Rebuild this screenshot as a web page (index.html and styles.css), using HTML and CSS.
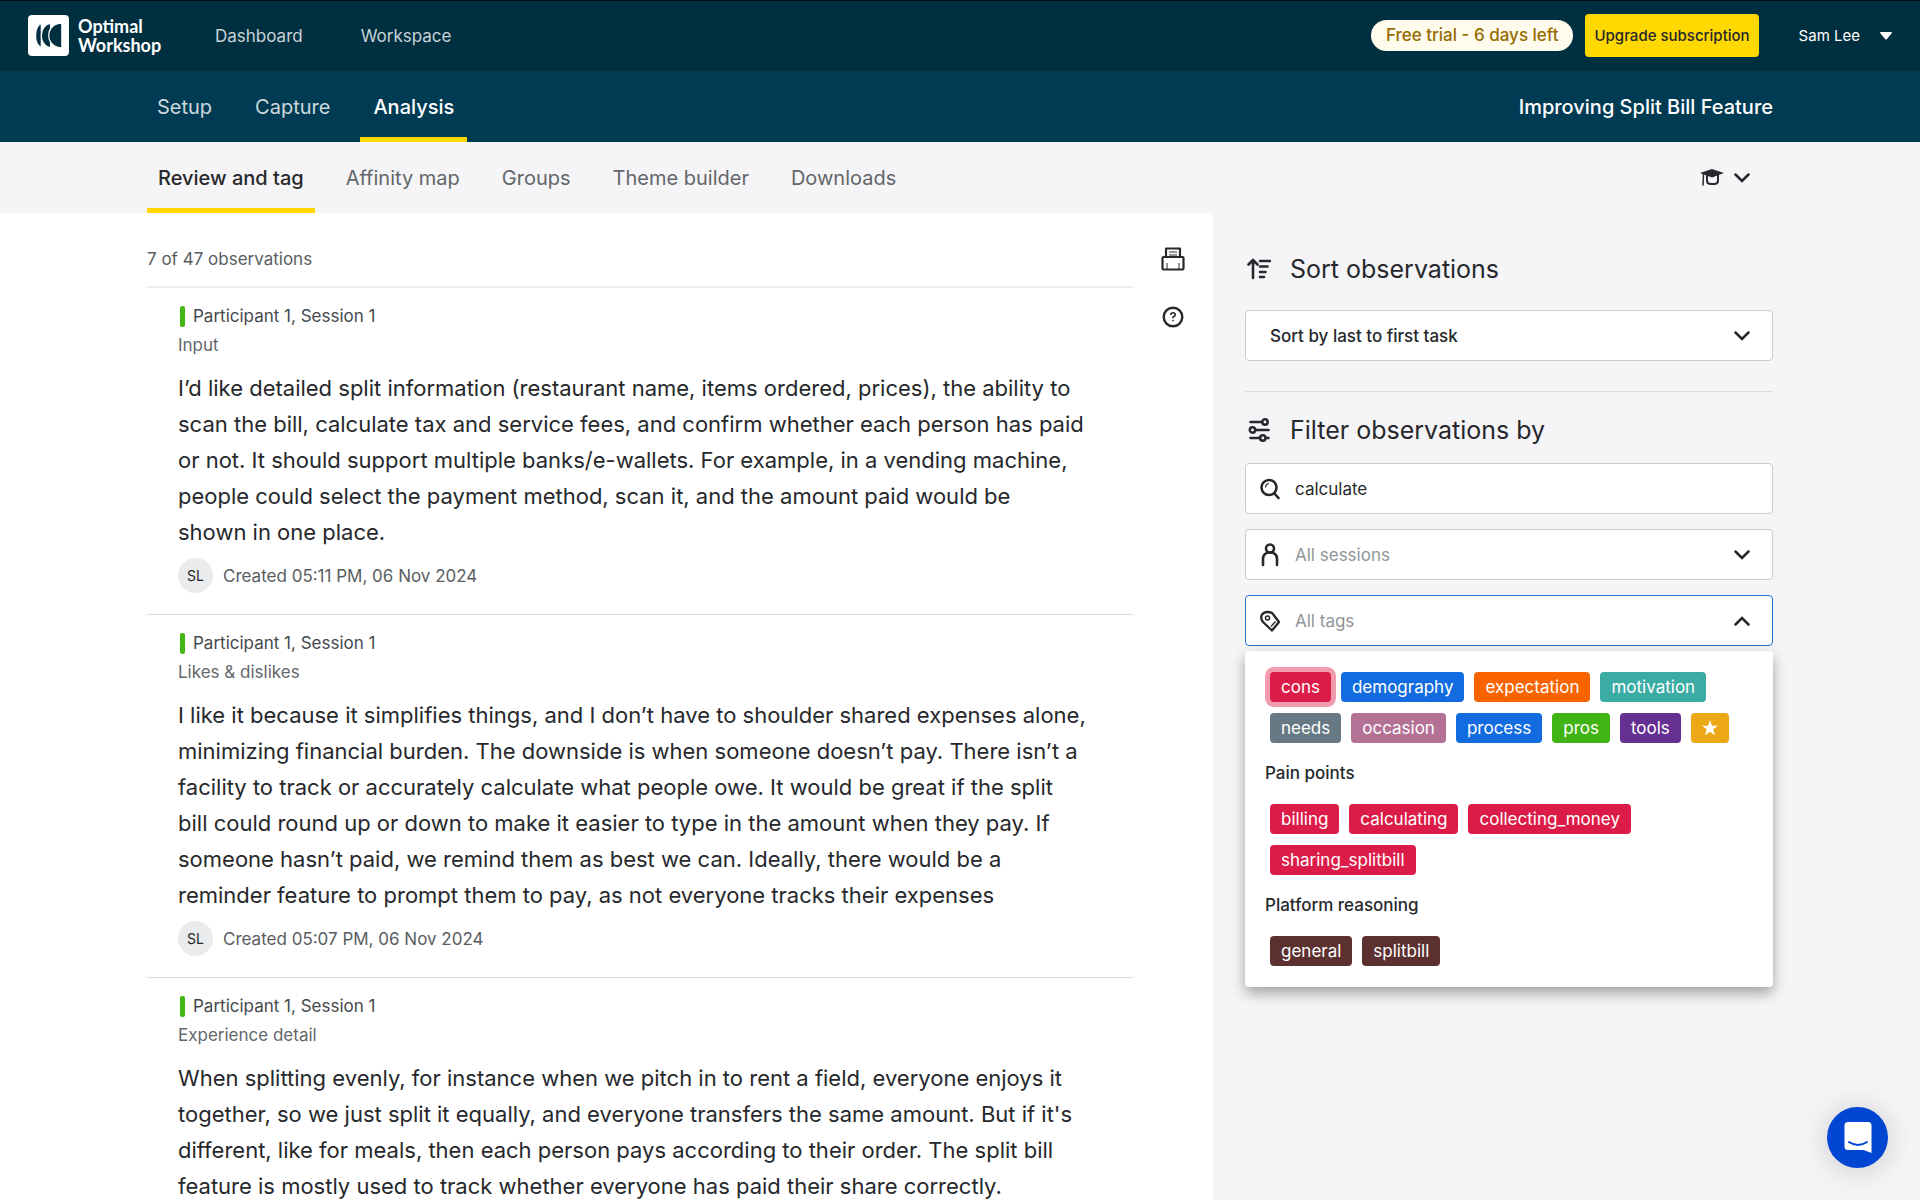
FILE: index.html
```html
<!DOCTYPE html>
<html lang="en">
<head>
  <meta charset="UTF-8" />
  <meta name="viewport" content="width=device-width, initial-scale=1.0"/>
  <title>Improving Split Bill Feature - Review and tag</title>
  <link rel="stylesheet" href="styles.css">
</head>
<body>
  <header class="topbar">
    <a href="#" class="logo">
      <svg class="logo-mark" viewBox="0 0 40 40">
        <rect width="40" height="40" rx="4" fill="#fff"/>
        <g fill="#002f40" stroke="#fff" stroke-width="1.200">
          <path d="M13 8c-7.500 4-7.500 20 0 24z"/>
          <path d="M22 8c-12 2-12 22 0 24z"/>
          <path d="M33 8c-17 0-17 24 0 24z"/>
        </g>
      </svg>
      <span class="logo-text">Optimal<br>Workshop</span>
    </a>
    <nav class="top-links">
      <a href="#">Dashboard</a>
      <a href="#">Workspace</a>
    </nav>
    <div class="account">
      <span class="trial">Free trial - 6 days left</span>
      <button type="button" class="upgrade">Upgrade subscription</button>
      <button type="button" class="user">
        Sam Lee
        <svg width="12" height="8" viewBox="0 0 12 8"><path d="M1 0h10q1.500 0 .5 1.500L7 7q-1 1-2 0L.5 1.500Q-.5 0 1 0z" fill="#fff"/></svg>
      </button>
    </div>
  </header>

  <div class="studybar">
    <nav class="study-tabs">
      <a href="#">Setup</a>
      <a href="#">Capture</a>
      <a href="#" class="active">Analysis</a>
    </nav>
    <div class="study-name">Improving Split Bill Feature</div>
  </div>

  <div class="subbar">
    <nav class="sub-tabs">
      <a href="#" class="active">Review and tag</a>
      <a href="#">Affinity map</a>
      <a href="#">Groups</a>
      <a href="#">Theme builder</a>
      <a href="#">Downloads</a>
    </nav>
    <button type="button" class="learn" aria-label="Learn">
      <svg width="24" height="17" viewBox="0 0 24 17" fill="none">
        <path d="M12 0l12 4-12 4.500L0 4z" fill="#26282b"/>
        <path d="M7 6v5.500q0 3.500 4 3.500h3q4 0 4-3.500V6" stroke="#26282b" stroke-width="2"/>
        <path d="M3.500 5L3 16.500" stroke="#26282b" stroke-width="1.500"/>
      </svg>
      <svg class="chevron" viewBox="0 0 16 10"><path d="M1.500 1.500L8 8l6.500-6.500"/></svg>
    </button>
  </div>

  <div class="page">
    <main class="content">
      <section class="observations">
        <p class="count">7 of 47 observations</p>

        <article class="observation">
          <h3>Participant 1, Session 1</h3>
          <p class="task">Input</p>
          <p class="note">
            I’d like detailed split information (restaurant name, items ordered, prices), the ability to<br>
            scan the bill, calculate tax and service fees, and confirm whether each person has paid<br>
            or not. It should support multiple banks/e-wallets. For example, in a vending machine,<br>
            people could select the payment method, scan it, and the amount paid would be<br>
            shown in one place.
          </p>
          <div class="meta"><span class="avatar">SL</span>Created 05:11 PM, 06 Nov 2024</div>
        </article>

        <article class="observation">
          <h3>Participant 1, Session 1</h3>
          <p class="task">Likes &amp; dislikes</p>
          <p class="note">
            I like it because it simplifies things, and I don’t have to shoulder shared expenses alone,<br>
            minimizing financial burden. The downside is when someone doesn’t pay. There isn’t a<br>
            facility to track or accurately calculate what people owe. It would be great if the split<br>
            bill could round up or down to make it easier to type in the amount when they pay. If<br>
            someone hasn’t paid, we remind them as best we can. Ideally, there would be a<br>
            reminder feature to prompt them to pay, as not everyone tracks their expenses
          </p>
          <div class="meta"><span class="avatar">SL</span>Created 05:07 PM, 06 Nov 2024</div>
        </article>

        <article class="observation">
          <h3>Participant 1, Session 1</h3>
          <p class="task">Experience detail</p>
          <p class="note">
            When splitting evenly, for instance when we pitch in to rent a field, everyone enjoys it<br>
            together, so we just split it equally, and everyone transfers the same amount. But if it's<br>
            different, like for meals, then each person pays according to their order. The split bill<br>
            feature is mostly used to track whether everyone has paid their share correctly.
          </p>
        </article>
      </section>

      <div class="tools">
        <button type="button" aria-label="Print">
          <svg width="24" height="24" viewBox="0 0 24 24" fill="none" stroke="#26282b" stroke-width="2.200" stroke-linejoin="round">
            <path d="M5 10V1.500h14V10"/>
            <rect x="1.500" y="10" width="21" height="12.500" rx="1"/>
            <path d="M8 5h8M8 8h8" stroke-width="1.200"/>
            <path d="M6 16v6M18 16v6" stroke-width="1"/>
          </svg>
        </button>
        <button type="button" aria-label="Help">
          <svg width="24" height="24" viewBox="0 0 24 24" fill="none" stroke="#26282b" stroke-width="2.400">
            <circle cx="12" cy="12" r="9.300"/>
            <path d="M9.800 10q0-2.200 2.200-2.200t2.200 2q0 1.300-2.200 2.500v1" stroke-width="1.600"/>
            <circle cx="12" cy="15.600" r=".5" stroke-width="1"/>
          </svg>
        </button>
      </div>
    </main>

    <aside class="sidebar">
      <h2>
        <svg width="24" height="24" viewBox="0 0 24 24" fill="none" stroke="#26282b" stroke-width="2.600" stroke-linecap="round" stroke-linejoin="round">
          <path d="M6 21V3M1.500 7.500L6 3l4.500 4.500M13 4h10M13 9.500h7.500M13 15h5.500M13 20h4"/>
        </svg>
        <label for="sort">Sort observations</label>
      </h2>
      <div class="field">
        <select id="sort" class="sort">
          <option>Sort by last to first task</option>
          <option>Sort by first to last task</option>
        </select>
        <svg class="chevron" viewBox="0 0 16 10"><path d="M1.500 1.500L8 8l6.500-6.500"/></svg>
      </div>

      <hr>

      <h2>
        <svg width="24" height="24" viewBox="0 0 24 24" fill="none" stroke="#26282b" stroke-width="2.500" stroke-linecap="round">
          <path d="M3.500 4h11M9 12h12.500M3.500 20H13M19 20h2.500"/>
          <circle cx="18" cy="4" r="2.700"/>
          <circle cx="5.500" cy="12" r="2.700"/>
          <circle cx="15.800" cy="20" r="2.700"/>
        </svg>
        Filter observations by
      </h2>

      <div class="filters">
        <div class="field">
          <svg class="field-icon" viewBox="0 0 20 24" fill="none" stroke="#26282b" stroke-width="2.600" stroke-linecap="round">
            <circle cx="9" cy="10.500" r="7.500"/>
            <path d="M14.500 16.500l4 4.500"/>
            <path d="M5.500 10q.5-3 3-3.500" stroke-width="1.200"/>
          </svg>
          <input type="text" id="search" value="calculate" aria-label="Search observations">
        </div>

        <div class="field">
          <svg class="field-icon" viewBox="0 0 20 24" fill="none" stroke="#26282b" stroke-width="2.600" stroke-linecap="round">
            <circle cx="10" cy="5.500" r="4"/>
            <path d="M3 22v-6q0-6.500 7-6.500t7 6.500v6"/>
          </svg>
          <select id="sessions" class="empty" aria-label="Sessions">
            <option>All sessions</option>
          </select>
          <svg class="chevron" viewBox="0 0 16 10"><path d="M1.500 1.500L8 8l6.500-6.500"/></svg>
        </div>

        <div class="field open">
          <svg class="field-icon" viewBox="0 0 20 24" fill="none" stroke="#26282b" stroke-width="2.300" stroke-linejoin="round">
            <path d="M2 5.500q2-2.500 5.500-2.500t5 1.500L19 13l-7 8.500L3 13q-3-4-1-7.500z"/>
            <circle cx="7.500" cy="9" r="2" stroke-width="1.500"/>
            <path d="M15.500 12.500l-4.500 5" stroke-width="1.300"/>
          </svg>
          <input type="text" id="tags" placeholder="All tags" aria-label="Tags">
          <svg class="chevron" viewBox="0 0 16 10"><path d="M1.500 8.500L8 2l6.500 6.500"/></svg>

          <div class="tag-menu">
            <div class="tag-list">
              <button type="button" class="tag red selected">cons</button>
              <button type="button" class="tag blue">demography</button>
              <button type="button" class="tag orange">expectation</button>
              <button type="button" class="tag teal">motivation</button>
              <button type="button" class="tag slate">needs</button>
              <button type="button" class="tag mauve">occasion</button>
              <button type="button" class="tag blue">process</button>
              <button type="button" class="tag green">pros</button>
              <button type="button" class="tag purple">tools</button>
              <button type="button" class="tag gold" aria-label="Starred">
                <svg width="16" height="18" viewBox="0 0 24 24"><path d="M12 0l3 8.500h9l-7.200 5.500 2.700 9L12 17.500 4.500 23l2.700-9L0 8.500h9z" fill="#fff"/></svg>
              </button>
            </div>
            <h4>Pain points</h4>
            <div class="tag-list">
              <button type="button" class="tag red">billing</button>
              <button type="button" class="tag red">calculating</button>
              <button type="button" class="tag red">collecting_money</button>
              <button type="button" class="tag red">sharing_splitbill</button>
            </div>
            <h4>Platform reasoning</h4>
            <div class="tag-list">
              <button type="button" class="tag brown">general</button>
              <button type="button" class="tag brown">splitbill</button>
            </div>
          </div>
        </div>
      </div>
    </aside>
  </div>

  <button type="button" class="chat" aria-label="Open chat">
    <svg width="28" height="32" viewBox="0 0 28 32">
      <path d="M4 0h20q3.500 0 3.500 3.500V31l-8-3H4q-3.500 0-3.500-3.500v-21Q.5 0 4 0z" fill="#fff"/>
      <path d="M5 20q9 6 18 0" fill="none" stroke="#0046d2" stroke-width="2" stroke-linecap="round"/>
    </svg>
  </button>
</body>
</html>
```

FILE: styles.css
```css
* {
  box-sizing: border-box;
}

body {
  display: flex;
  flex-direction: column;
  height: 100vh;
  margin: 0;
  overflow: hidden;
  background-color: #fff;
  color: #26282b;
  font-family: Inter, "Liberation Sans", sans-serif;
  font-size: 17px;
}

h2, h3, h4, p {
  margin: 0;
  font-weight: 400;
}

a {
  text-decoration: none;
}

button, input, select {
  border: none;
  padding: 0;
  background: none;
  color: inherit;
  font: inherit;
}

button {
  cursor: pointer;
}

svg {
  flex-shrink: 0;
}

/* Top bar */
.topbar {
  display: flex;
  align-items: center;
  flex-shrink: 0;
  height: 71px;
  padding: 0 28px;
  background-color: #002f40;
  box-shadow: inset 0 1px 0 #000d16;
}

.logo {
  display: flex;
  align-items: center;
  gap: 9px;
  width: 187px;
  color: #fff;
}

.logo-mark {
  width: 41px;
  height: 41px;
}

.logo-text {
  font-family: Lato, sans-serif;
  font-size: 18px;
  font-weight: 700;
  line-height: 19px;
}

.top-links {
  display: flex;
  gap: 58px;
}

.top-links a {
  color: #c9d3d9;
}

.account {
  display: flex;
  align-items: center;
  margin-left: auto;
}

.trial {
  padding: 0 15px;
  border-radius: 16px;
  background-color: #fffbed;
  color: #966b00;
  font-weight: 500;
  line-height: 31px;
}

.upgrade {
  height: 43px;
  margin-left: 12px;
  padding: 0 9px;
  border-radius: 4px;
  background-color: #ffd800;
  font-size: 15px;
  font-weight: 500;
}

.user {
  display: flex;
  align-items: center;
  gap: 20px;
  margin-left: 40px;
  color: #fff;
  font-size: 15px;
}

/* Study bar */
.studybar {
  display: flex;
  align-items: center;
  justify-content: space-between;
  flex-shrink: 0;
  height: 71px;
  padding: 0 147px;
  background-color: #003b54;
  font-size: 20px;
}

.study-tabs, .sub-tabs {
  display: flex;
  height: 100%;
}

.study-tabs {
  gap: 17px;
  margin-left: -3px;
}

.study-tabs a, .sub-tabs a {
  display: flex;
  align-items: center;
  border-top: 5px solid transparent;
  border-bottom: 5px solid transparent;
}

.study-tabs a {
  padding: 0 13px;
  color: #ccd8de;
}

.study-tabs a.active {
  border-bottom-color: #ffd800;
  color: #fff;
  font-weight: 500;
}

.study-name {
  color: #fff;
  font-weight: 500;
}

/* Section tabs */
.subbar {
  display: flex;
  align-items: center;
  justify-content: space-between;
  flex-shrink: 0;
  height: 71px;
  padding: 0 147px;
  background-color: #f5f5f8;
  font-size: 20px;
}

.sub-tabs {
  gap: 20px;
}

.sub-tabs a {
  padding: 0 11px;
  color: #626669;
}

.sub-tabs a.active {
  border-bottom-color: #ffd800;
  color: #26282b;
  font-weight: 500;
}

.learn {
  display: flex;
  align-items: center;
  gap: 10px;
  margin-right: 23px;
}

.chevron {
  width: 16px;
  height: 10px;
  fill: none;
  stroke: #26282b;
  stroke-width: 2.5;
  stroke-linecap: round;
}

/* Page */
.page {
  display: flex;
  flex: 1;
  min-height: 0;
}

.content {
  display: flex;
  flex: 1;
  padding-left: 147px;
  overflow-y: auto;
  scrollbar-width: none;
}

.observations {
  flex: 1;
}

.count {
  padding: 32px 0 12px;
  border-bottom: 2px solid #ededee;
  color: #595d61;
  line-height: 29px;
}

.observation {
  padding: 14px 30px 21px 31px;
  border-bottom: 1px solid #dcdfe1;
}

.observation h3 {
  display: flex;
  align-items: center;
  gap: 8px;
  color: #45494c;
  font-size: 17px;
  line-height: 29px;
}

.observation h3::before {
  content: "";
  width: 5px;
  height: 21px;
  margin-left: 2px;
  border-radius: 2px;
  background-color: #43b814;
}

.task {
  color: #63676a;
  line-height: 29px;
}

.note {
  margin-top: 10px;
  font-size: 22px;
  line-height: 36px;
}

.meta {
  display: flex;
  align-items: center;
  gap: 10px;
  margin-top: 8px;
  color: #595d61;
}

.avatar {
  width: 35px;
  border-radius: 50%;
  background-color: #e9ebec;
  color: #26282b;
  font-size: 14px;
  line-height: 35px;
  text-align: center;
}

.tools {
  display: flex;
  flex-direction: column;
  align-items: center;
  gap: 34px;
  width: 80px;
  padding-top: 34px;
}

.tools button {
  display: flex;
}

/* Sort and filter */
.sidebar {
  width: 707px;
  padding: 39px 147px 0 32px;
  background-color: #f5f5f8;
}

.sidebar h2 {
  display: flex;
  align-items: center;
  gap: 19px;
  height: 34px;
  padding-left: 2px;
  font-size: 25px;
}

.sidebar hr {
  height: 1px;
  margin: 30px 0 21px;
  border: none;
  background-color: #d9dcde;
}

.field {
  position: relative;
  display: flex;
  align-items: center;
  height: 51px;
  padding: 0 22px 0 14px;
  border: 1px solid #c8cbce;
  border-radius: 4px;
  background-color: #fff;
}

.sidebar h2 + .field {
  margin-top: 24px;
}

.field.open {
  border-color: #1f72cf;
}

.field input, .field select {
  flex: 1;
  min-width: 0;
  height: 100%;
  outline: none;
  appearance: none;
}

.field .sort {
  padding-left: 10px;
  font-weight: 500;
}

.field .empty, .field input::placeholder {
  color: #919598;
  opacity: 1;
}

.field-icon {
  width: 20px;
  height: 24px;
  margin-right: 15px;
}

.filters {
  display: flex;
  flex-direction: column;
  gap: 15px;
  margin-top: 16px;
}

.tag-menu {
  position: absolute;
  top: calc(100% + 6px);
  left: -1px;
  right: -1px;
  padding: 21px 20px;
  border-radius: 4px;
  background-color: #fff;
  box-shadow: 0 6px 14px rgba(0, 0, 0, 0.35);
}

.tag-menu h4 {
  margin: 18px 0 19px;
  font-weight: 500;
  line-height: 24px;
}

.tag-list {
  display: flex;
  flex-wrap: wrap;
  gap: 11px 10px;
  padding-left: 5px;
}

.tag {
  display: flex;
  align-items: center;
  height: 30px;
  padding: 0 11px;
  border-radius: 4px;
  color: #fff;
}

.tag.selected {
  box-shadow: 0 0 0 5px #f29bae;
}

.red { background-color: #dc1c48; }
.blue { background-color: #126ce0; }
.orange { background-color: #f96400; }
.teal { background-color: #3aaca4; }
.slate { background-color: #667984; }
.mauve { background-color: #b47196; }
.green { background-color: #40b414; }
.purple { background-color: #663092; }
.gold { background-color: #eca815; }
.brown { background-color: #5c302f; }

/* Chat launcher */
.chat {
  position: fixed;
  right: 32px;
  bottom: 32px;
  display: flex;
  align-items: center;
  justify-content: center;
  width: 61px;
  height: 61px;
  border-radius: 50%;
  background-color: #0046d2;
  box-shadow: 0 2px 30px rgba(0, 0, 0, 0.18);
}
```
